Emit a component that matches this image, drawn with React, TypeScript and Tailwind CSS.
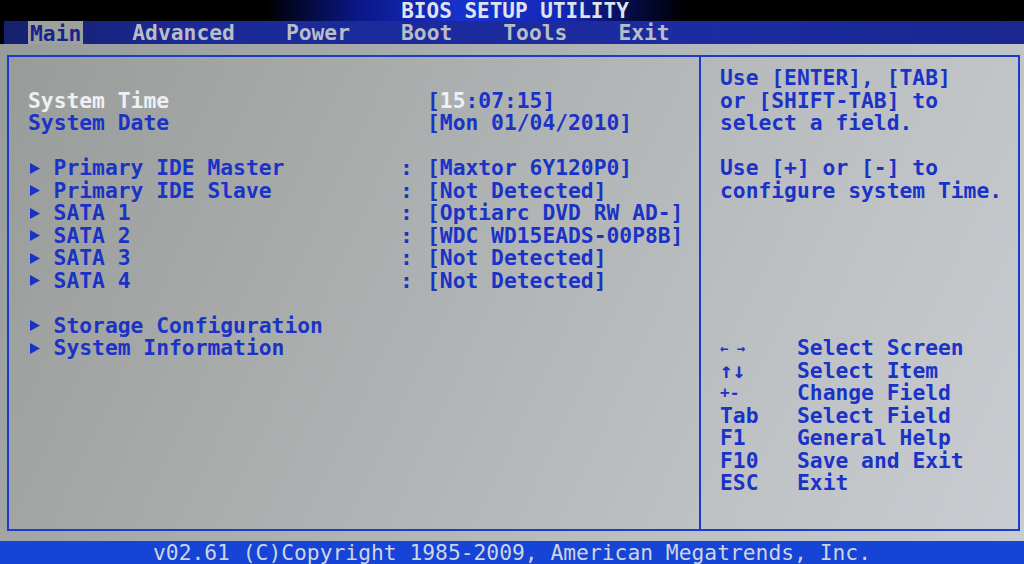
import React from 'react'

const FONT = "font-['DejaVu_Sans_Mono','Liberation_Mono',monospace]"

function Arrow() {
  return (
    <span className="inline-flex w-[25.6px] items-center pl-[2px]">
      <svg width="10" height="11" viewBox="0 0 10 11">
        <polygon points="0,0 10,5.5 0,11" fill="#1a33c6" />
      </svg>
    </span>
  )
}

const devices = [
  ['Primary IDE Master', '[Maxtor 6Y120P0]'],
  ['Primary IDE Slave', '[Not Detected]'],
  ['SATA 1', '[Optiarc DVD RW AD-]'],
  ['SATA 2', '[WDC WD15EADS-00P8B]'],
  ['SATA 3', '[Not Detected]'],
  ['SATA 4', '[Not Detected]'],
]

const keys: [React.ReactNode, string][] = [
  [<span className="text-[14px]">← →</span>, 'Select Screen'],
  ['↑↓', 'Select Item'],
  [<span className="text-[16px]">+-</span>, 'Change Field'],
  ['Tab', 'Select Field'],
  ['F1', 'General Help'],
  ['F10', 'Save and Exit'],
  ['ESC', 'Exit'],
]

const menu = ['Main', 'Advanced', 'Power', 'Boot', 'Tools', 'Exit']

export default function App() {
  return (
    <div
      className={`${FONT} flex h-[564px] w-[1024px] flex-col overflow-hidden bg-black text-[21.3px] font-bold leading-[22.5px] text-[#1a33c6]`}
    >
      {/* Title bar */}
      <div className="flex h-[21px] shrink-0 items-center justify-center bg-[linear-gradient(90deg,#000_26%,#0a1788_35%,#1732cc_45%,#1428b8_55%,#050a40_62%,#000_67%)]">
        <span className="pl-[6px] pt-[1px] text-[21px] leading-[20px] text-[#dfe3ee]">BIOS SETUP UTILITY</span>
      </div>

      {/* Menu bar */}
      <div className="ml-[4px] flex h-[23px] shrink-0 items-center gap-[51px] bg-[linear-gradient(90deg,#16206e,#1b2a98_20%,#1c2ba0_70%,#19278e)] pl-[26px] leading-[21px] text-[#b9bdc6]">
        {menu.map((m) =>
          m === 'Main' ? (
            <span
              key={m}
              className="-mx-[2px] flex h-[23px] items-center bg-[#9da19e] px-[2px] pt-[1px] text-[#17248c]"
            >
              {m}
            </span>
          ) : (
            <span key={m}>{m}</span>
          )
        )}
      </div>

      {/* Body */}
      <div className="flex-1 bg-[linear-gradient(115deg,#979b99_0%,#adb0b0_40%,#bfc2c5_75%,#c9ccd0_100%)] pt-[11px] pb-[10px] pl-[7px] pr-[4px]">
        <div className="flex h-[476px] border-2 border-[#1c3acb]">
          {/* Left panel */}
          <div className="w-[692px] border-r-2 border-[#1c3acb] pl-[19px] pt-[10px]">
            <div className="h-[22.5px]" />
            <div className="flex">
              <span className="w-[399px] text-[#eef0f4]">System Time</span>
              <span>
                [<span className="text-[#eef0f4]">15</span>:07:15]
              </span>
            </div>
            <div className="flex">
              <span className="w-[399px]">System Date</span>
              <span>[Mon 01/04/2010]</span>
            </div>
            <div className="h-[22.5px]" />
            {devices.map(([label, value]) => (
              <div key={label} className="flex">
                <span className="flex w-[372px]">
                  <Arrow />
                  {label}
                </span>
                <span className="w-[27px]">:</span>
                <span>{value}</span>
              </div>
            ))}
            <div className="h-[22.5px]" />
            <div className="flex">
              <Arrow />
              Storage Configuration
            </div>
            <div className="flex">
              <Arrow />
              System Information
            </div>
          </div>

          {/* Right panel */}
          <div className="flex-1 pl-[19px] pt-[10px]">
            <div>Use [ENTER], [TAB]</div>
            <div>or [SHIFT-TAB] to</div>
            <div>select a field.</div>
            <div className="h-[22.5px]" />
            <div>Use [+] or [-] to</div>
            <div>configure system Time.</div>
            <div className="h-[135px]" />
            {keys.map(([k, d], i) => (
              <div key={i} className="flex">
                <span className="flex w-[77px] items-center">{k}</span>
                <span>{d}</span>
              </div>
            ))}
          </div>
        </div>
      </div>

      {/* Bottom bar */}
      <div className="flex h-[23px] shrink-0 items-center justify-center bg-[#1544d6] font-normal leading-[21px] text-[#cfd4e0]">
        v02.61 (C)Copyright 1985-2009, American Megatrends, Inc.
      </div>
    </div>
  )
}
